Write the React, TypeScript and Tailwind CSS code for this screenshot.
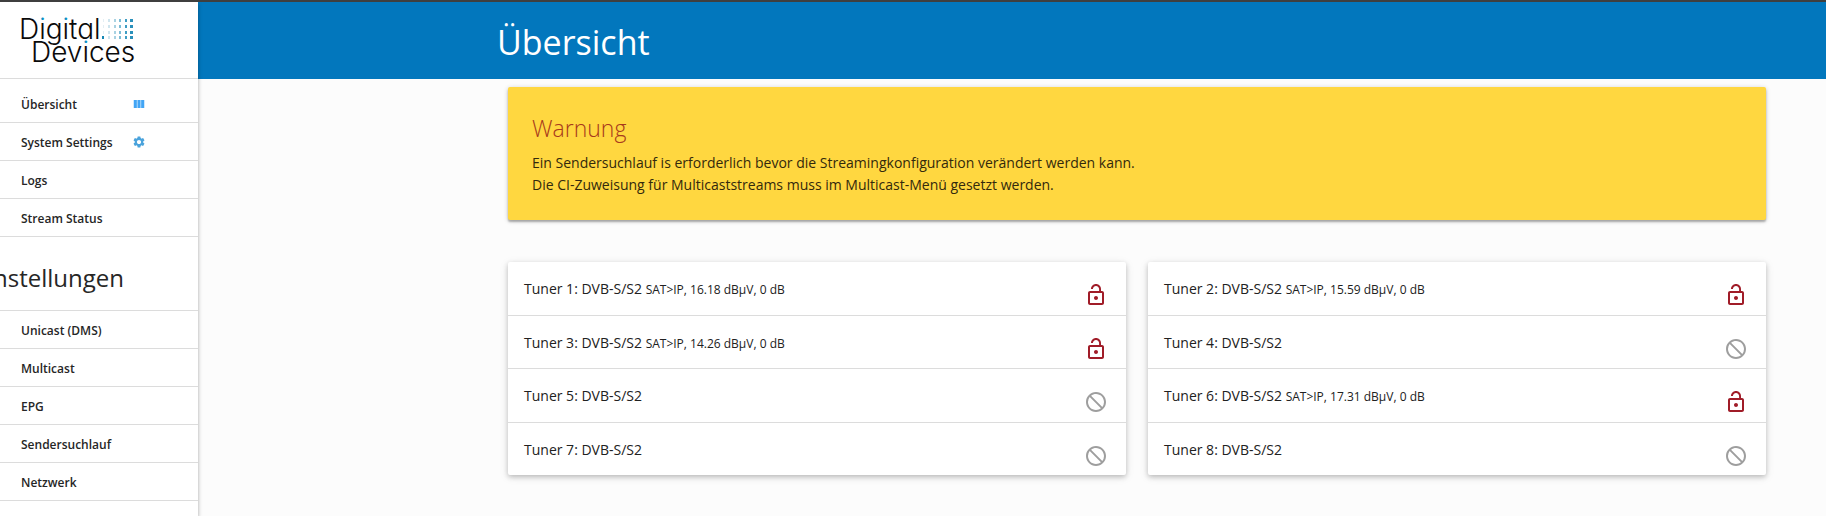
import { MdBlock, MdLockOpen, MdSettings, MdViewColumn } from "react-icons/md"

const mainLinks = [
  { label: "Übersicht", icon: "column" },
  { label: "System Settings", icon: "settings" },
  { label: "Logs" },
  { label: "Stream Status" },
]

const settingsLinks = ["Unicast (DMS)", "Multicast", "EPG", "Sendersuchlauf", "Netzwerk"]

type Tuner = { id: number; info?: string }

const leftTuners: Tuner[] = [
  { id: 1, info: "SAT>IP, 16.18 dBµV, 0 dB" },
  { id: 3, info: "SAT>IP, 14.26 dBµV, 0 dB" },
  { id: 5 },
  { id: 7 },
]

const rightTuners: Tuner[] = [
  { id: 2, info: "SAT>IP, 15.59 dBµV, 0 dB" },
  { id: 4 },
  { id: 6, info: "SAT>IP, 17.31 dBµV, 0 dB" },
  { id: 8 },
]

const dotColumns = [
  { x: 103, w: 1, color: "#e4eff4" },
  { x: 108, w: 2, color: "#cfe5ee" },
  { x: 114, w: 2, color: "#a9d2e2" },
  { x: 119, w: 2, color: "#7dbcd5" },
  { x: 125, w: 2, color: "#3f9dc3" },
  { x: 130, w: 3, color: "#2a90bb" },
]

function Logo() {
  return (
    <svg
      viewBox="0 0 197 76"
      className="h-[76px] w-[197px] font-['Inter',sans-serif] [font-feature-settings:'cv11']"
      role="img"
      aria-label="Digital Devices"
    >
      {/* blue above the stem, black below: only the dots of the i's get coloured */}
      <defs>
        <linearGradient id="dotTop" gradientUnits="userSpaceOnUse" x1="0" y1="0" x2="0" y2="40">
          <stop offset="0.5" stopColor="#0b8fc4" />
          <stop offset="0.5" stopColor="#0a0a0a" />
        </linearGradient>
        <linearGradient id="dotBottom" gradientUnits="userSpaceOnUse" x1="0" y1="0" x2="0" y2="86">
          <stop offset="0.5" stopColor="#0b8fc4" />
          <stop offset="0.5" stopColor="#0a0a0a" />
        </linearGradient>
      </defs>
      <text x="19" y="37" fontSize="28" fontWeight="300" fill="#0a0a0a">
        D<tspan fill="url(#dotTop)">i</tspan>g<tspan fill="url(#dotTop)">i</tspan>tal
      </text>
      <text x="31" y="60" fontSize="28" fontWeight="300" fill="#0a0a0a">
        Dev<tspan fill="url(#dotBottom)">i</tspan>ces
      </text>
      {dotColumns.map((c) =>
        [17, 23, 29, 34].map((y) => (
          <rect key={`${c.x}-${y}`} x={c.x} y={y} width={c.w} height="3" fill={c.color} />
        ))
      )}
      <rect x="102" y="34" width="2" height="3" fill="#1487b4" />
    </svg>
  )
}

function NavRow({ label, icon }: { label: string; icon?: string }) {
  return (
    <li className="border-b border-[#dcdcdc]">
      <a href="#" className="flex h-[37px] items-center pl-[21px] text-[12px] font-semibold text-[#262626]">
        <span className="w-[111px] pt-[3px]">{label}</span>
        {icon === "column" && <MdViewColumn className="size-[14px] text-[#42a5f5]" />}
        {icon === "settings" && <MdSettings className="size-[14px] text-[#4aa3dc]" />}
      </a>
    </li>
  )
}

function TunerList({ tuners }: { tuners: Tuner[] }) {
  return (
    <ul className="flex h-[213px] flex-col divide-y divide-[#dcdcdc] rounded-xs bg-white shadow-[0_2px_5px_0_rgba(0,0,0,0.2),0_2px_10px_0_rgba(0,0,0,0.1)]">
      {tuners.map((tuner) => (
        <li key={tuner.id} className="flex flex-1 items-start justify-between pr-[18px] pl-4">
          <p className="pt-4 text-[14px] leading-[22px] text-[#212121]">
            Tuner {tuner.id}: DVB-S/S2 {tuner.info && <span className="text-[12px]">{tuner.info}</span>}
          </p>
          {tuner.info ? (
            <MdLockOpen className="mt-[21px] size-6 text-[#a01c28]" />
          ) : (
            <MdBlock className="mt-[21px] size-6 -scale-x-100 text-[#9e9e9e]" />
          )}
        </li>
      ))}
    </ul>
  )
}

export default function App() {
  return (
    <div className="flex min-h-screen overflow-hidden border-t-2 border-[#3f3f3f] bg-[#fcfcfc] font-['Open_Sans','Noto_Sans',sans-serif]">
      <aside className="z-10 w-[198px] shrink-0 bg-white shadow-[0_2px_4px_0_rgba(0,0,0,0.35)]">
        <a href="#" className="block border-b border-[#dcdcdc]">
          <Logo />
        </a>
        <nav>
          <ul className="pt-[6px]">
            {mainLinks.map((link) => (
              <NavRow key={link.label} label={link.label} icon={link.icon} />
            ))}
          </ul>
          <div className="flex h-[74px] items-center border-b border-[#dcdcdc] pt-2">
            <h2 className="flex w-[124px] justify-end overflow-hidden text-[24px] text-[#262626]">Einstellungen</h2>
          </div>
          <ul>
            {settingsLinks.map((label) => (
              <NavRow key={label} label={label} />
            ))}
          </ul>
        </nav>
      </aside>

      <div className="min-w-0 flex-1">
        <header className="flex h-[77px] items-center bg-[#0277bd] pt-1 pl-[299px]">
          <h1 className="text-[34px] text-white">Übersicht</h1>
        </header>

        <main className="mr-[60px] ml-[310px] pt-2">
          <section className="h-[133px] rounded-xs bg-[#ffd740] px-6 pt-6 shadow-[0_2px_2px_0_rgba(0,0,0,0.25),0_1px_5px_0_rgba(0,0,0,0.2)]">
            <h2 className="text-[23px] leading-[34px] font-light text-[#a83a1c]">Warnung</h2>
            <p className="mt-[7px] text-[14px] leading-[22px] text-[#33290c]">
              Ein Sendersuchlauf is erforderlich bevor die Streamingkonfiguration verändert werden kann.
              <br />
              Die CI-Zuweisung für Multicaststreams muss im Multicast-Menü gesetzt werden.
            </p>
          </section>

          <div className="mt-[42px] grid grid-cols-2 gap-[22px]">
            <TunerList tuners={leftTuners} />
            <TunerList tuners={rightTuners} />
          </div>
        </main>
      </div>
    </div>
  )
}
